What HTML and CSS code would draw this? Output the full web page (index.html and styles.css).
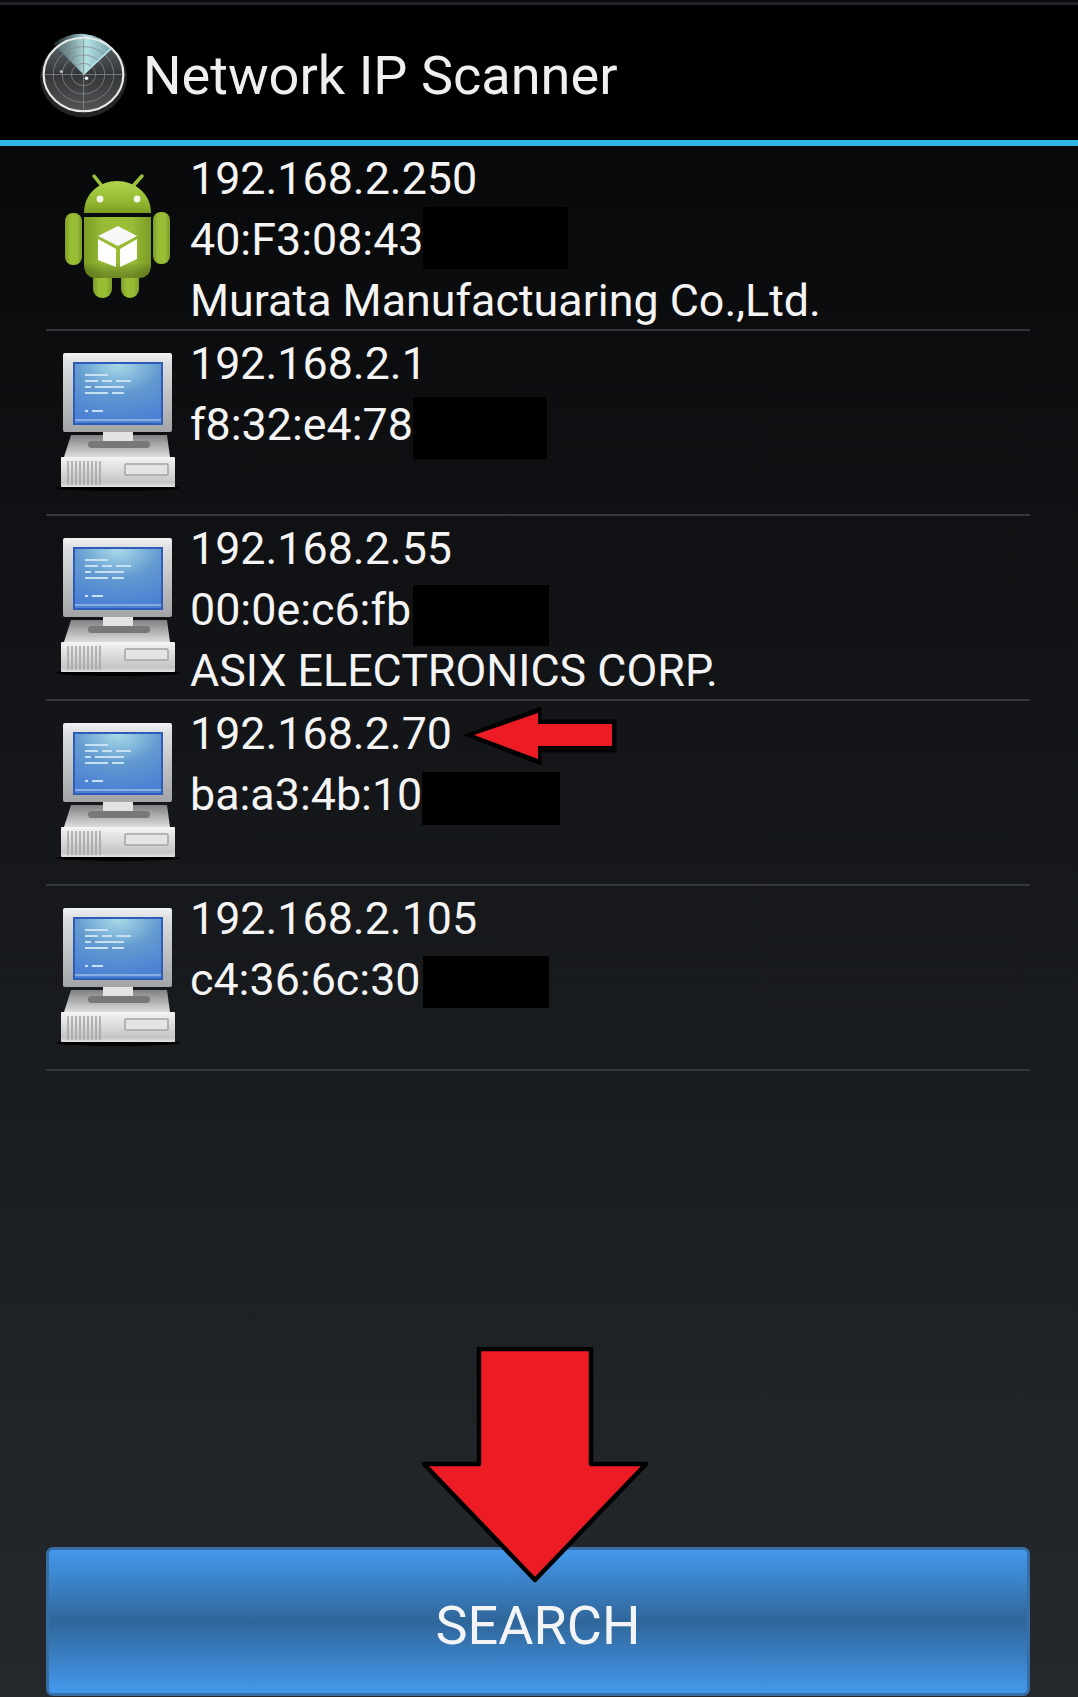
FILE: index.html
```html
<!DOCTYPE html>
<html lang="en">
<head>
<meta charset="utf-8">
<title>Network IP Scanner</title>
<link rel="stylesheet" href="styles.css">
</head>
<body>
<svg class="defs" width="0" height="0" aria-hidden="true">
  <defs>
    <linearGradient id="monFrame" x1="0" y1="0" x2="0" y2="1"><stop offset="0" stop-color="#f2f3f4"/><stop offset="0.12" stop-color="#dcdedf"/><stop offset="1" stop-color="#a2a4a6"/></linearGradient>
    <radialGradient id="monScreen" cx="0.5" cy="0" r="1"><stop offset="0" stop-color="#a9dbe8"/><stop offset="0.5" stop-color="#6299d0"/><stop offset="1" stop-color="#4b80d4"/></radialGradient>
    <linearGradient id="caseFront" x1="0" y1="0" x2="0" y2="1"><stop offset="0" stop-color="#f4f4f4"/><stop offset="0.85" stop-color="#c4c5c6"/><stop offset="1" stop-color="#e4e4e4"/></linearGradient>
    <linearGradient id="caseTop" x1="0" y1="0" x2="0" y2="1"><stop offset="0" stop-color="#7f8082"/><stop offset="1" stop-color="#dcddde"/></linearGradient>
    <linearGradient id="droidBody" x1="0" y1="0" x2="1" y2="0"><stop offset="0" stop-color="#7c9c26"/><stop offset="0.3" stop-color="#98bd36"/><stop offset="0.7" stop-color="#98bd36"/><stop offset="1" stop-color="#7c9c26"/></linearGradient>
    <linearGradient id="droidShade" x1="0" y1="0" x2="0" y2="1"><stop offset="0" stop-color="#000" stop-opacity="0"/><stop offset="0.75" stop-color="#000" stop-opacity="0"/><stop offset="1" stop-color="#3c4a10" stop-opacity="0.45"/></linearGradient>
    <linearGradient id="droidHead" x1="0" y1="0" x2="0" y2="1"><stop offset="0" stop-color="#b0d44e"/><stop offset="0.6" stop-color="#94ba32"/><stop offset="1" stop-color="#7d9e26"/></linearGradient>
    <linearGradient id="radarDisc" x1="0" y1="0" x2="0" y2="1"><stop offset="0" stop-color="#5f6b6f"/><stop offset="0.5" stop-color="#343638"/><stop offset="1" stop-color="#545556"/></linearGradient>
    <linearGradient id="radarWedge" x1="0" y1="0" x2="1" y2="0"><stop offset="0" stop-color="#6d9298" stop-opacity="0.25"/><stop offset="0.55" stop-color="#b4e2e4"/><stop offset="1" stop-color="#7fb4ba" stop-opacity="0.8"/></linearGradient>
    <filter id="soft" x="-5%" y="-5%" width="110%" height="110%"><feGaussianBlur stdDeviation="0.6"/></filter>
    <filter id="softer" x="-5%" y="-5%" width="110%" height="110%"><feGaussianBlur stdDeviation="0.75"/></filter>
    <symbol id="computer" viewBox="0 0 130 150">
      <g filter="url(#softer)">
        <ellipse cx="68" cy="143" rx="62" ry="3" fill="#000"/>
        <path d="M21 90H117L120 112H14Z" fill="url(#caseTop)"/>
        <rect x="11" y="112" width="114" height="30" rx="1" fill="url(#caseFront)"/>
        <path d="M18 116V140M22 116V140M26 116V140M30 116V140M34 116V140M38 116V140M42 116V140M46 116V140M50 116V140" stroke="#a5a6a7" stroke-width="1.6"/>
        <rect x="75" y="119" width="43" height="11" rx="1" fill="#e4e4e4" stroke="#a3a4a5" stroke-width="1.5"/>
        <rect x="53" y="87" width="30" height="9" fill="#e2e3e3"/>
        <rect x="38" y="96" width="62" height="7" rx="3.5" fill="#77787a"/>
        <rect x="13" y="8" width="109" height="79" rx="2" fill="url(#monFrame)"/>
        <rect x="23" y="17" width="90" height="63" fill="#2f5cb8"/>
        <rect x="25" y="19" width="86" height="59" fill="url(#monScreen)"/>
        <path d="M25 75H111" stroke="#87aede" stroke-width="2"/>
        <path d="M35 30H58M35 36H48M52 36H62M66 36H81M35 42H41M45 42H74M35 48H58M62 48H74M35 66H38M42 66H53" stroke="#c6e2f2" stroke-width="2.2"/>
      </g>
    </symbol>
  </defs>
</svg>
<div class="screen">
  <div class="status-line"></div>
  <header class="app-bar">
    <svg class="radar" viewBox="0 0 100 100" preserveAspectRatio="none" aria-hidden="true">
      <g filter="url(#soft)">
        <ellipse cx="50" cy="53" rx="43" ry="43" fill="#3a3a3a" opacity="0.6"/>
        <circle cx="50" cy="50" r="40" fill="url(#radarDisc)"/>
        <path d="M50 50L20 17A40 40 0 0 1 79 22Z" fill="url(#radarWedge)"/>
        <g fill="none" stroke="#85898b" stroke-width="0.8">
          <circle cx="50" cy="50" r="12"/>
          <circle cx="50" cy="50" r="21"/>
          <circle cx="50" cy="50" r="30"/>
          <path d="M10 50H90M50 10V90"/>
        </g>
        <path d="M50 50L77 22" stroke="#b7e6e8" stroke-width="1.4"/>
        <circle cx="53" cy="54" r="1.8" fill="#f2f2f2"/>
        <circle cx="28" cy="47" r="1.5" fill="#c8c8c8"/>
        <circle cx="50" cy="50" r="39.5" fill="none" stroke="#e6e8e8" stroke-width="2.2"/>
      </g>
    </svg>
    <h1 class="app-title">Network IP Scanner</h1>
  </header>
  <div class="accent-line"></div>
  <main class="device-list">
    <section class="device">
      <svg class="device-icon android" viewBox="0 0 130 140" aria-hidden="true">
        <g filter="url(#soft)">
          <path d="M52 16L44 6M83 16L92 6" stroke="#9cc23a" stroke-width="3.5" stroke-linecap="round"/>
          <path d="M34 43C34 23 50 11 67 11S101 23 101 43Z" fill="url(#droidHead)"/>
          <circle cx="50" cy="29" r="3.4" fill="#f4f6ea"/>
          <circle cx="87" cy="29" r="3.4" fill="#f4f6ea"/>
          <rect x="15" y="43" width="17" height="52" rx="8" fill="url(#droidBody)"/>
          <rect x="103" y="42" width="17" height="52" rx="8" fill="url(#droidBody)"/>
          <rect x="43" y="100" width="19" height="28" rx="9" fill="url(#droidBody)"/>
          <rect x="71" y="100" width="18" height="28" rx="9" fill="url(#droidBody)"/>
          <path d="M34 47H101V94Q101 108 88 108H47Q34 108 34 94Z" fill="url(#droidBody)"/>
          <path d="M34 47H101V94Q101 108 88 108H47Q34 108 34 94Z" fill="url(#droidShade)"/>
          <path d="M68 56L87 66L68 76L48 66Z" fill="#f7f7f7"/>
          <path d="M48 69L66 79V97L48 90Z" fill="#fff"/>
          <path d="M70 79L87 69V89L70 97Z" fill="#fff"/>
        </g>
      </svg>
      <div class="device-info">
        <div class="line">192.168.2.250</div>
        <div class="line">40:F3:08:43</div>
        <div class="line">Murata Manufactuaring Co.,Ltd.</div>
      </div>
      <div class="redact redact-1"></div>
    </section>
    <section class="device">
      <svg class="device-icon computer" aria-hidden="true"><use href="#computer"/></svg>
      <div class="device-info">
        <div class="line">192.168.2.1</div>
        <div class="line">f8:32:e4:78</div>
      </div>
      <div class="redact redact-2"></div>
    </section>
    <section class="device">
      <svg class="device-icon computer" aria-hidden="true"><use href="#computer"/></svg>
      <div class="device-info">
        <div class="line">192.168.2.55</div>
        <div class="line">00:0e:c6:fb</div>
        <div class="line">ASIX ELECTRONICS CORP.</div>
      </div>
      <div class="redact redact-3"></div>
    </section>
    <section class="device">
      <svg class="device-icon computer" aria-hidden="true"><use href="#computer"/></svg>
      <div class="device-info">
        <div class="line">192.168.2.70</div>
        <div class="line">ba:a3:4b:10</div>
      </div>
      <div class="redact redact-4"></div>
      <svg class="arrow-left" viewBox="0 0 156 60" aria-hidden="true">
        <path d="M2 29L79 1V14H154V46H79V59Z" fill="#000" stroke="#000" stroke-width="1" stroke-linejoin="round"/>
        <path d="M12 29L76 7V18H150V40H76V53Z" fill="#ed1c24"/>
      </svg>
    </section>
    <section class="device">
      <svg class="device-icon computer" aria-hidden="true"><use href="#computer"/></svg>
      <div class="device-info">
        <div class="line">192.168.2.105</div>
        <div class="line">c4:36:6c:30</div>
      </div>
      <div class="redact redact-5"></div>
    </section>
  </main>
  <div class="footer">
    <button class="search-btn" type="button">SEARCH</button>
    <svg class="arrow-down" viewBox="0 0 228 238" aria-hidden="true">
      <path d="M58 2H170V117H225L114 233L3 117H58Z" fill="#ed1c24" stroke="#000" stroke-width="4.5" stroke-linejoin="round"/>
    </svg>
  </div>
</div>
</body>
</html>
```
FILE: styles.css
```css
* { box-sizing: border-box; }

html, body {
  margin: 0;
  padding: 0;
  background: #08090b;
}

.defs {
  position: absolute;
}

.screen {
  display: flex;
  flex-direction: column;
  width: 1078px;
  height: 1697px;
  overflow: hidden;
  font-family: Roboto, "Liberation Sans", sans-serif;
  color: #f4f4f4;
  background: linear-gradient(#08090b 146px, #25292d 100%);
}

.status-line {
  height: 5px;
  flex: none;
  background: linear-gradient(#0c0d0e 2px, #212428 2px);
}

.app-bar {
  display: flex;
  align-items: center;
  height: 135px;
  flex: none;
  background: #000;
}

.radar {
  width: 101px;
  height: 93px;
  margin: 3px 0 0 33px;
  flex: none;
}

.app-title {
  margin: 6px 0 0 9px;
  font-size: 54.1px;
  font-weight: 400;
  line-height: 62px;
  color: #efefef;
}

.accent-line {
  height: 6px;
  flex: none;
  background: #33b5e5;
}

.device-list {
  flex: 1;
  display: flex;
  flex-direction: column;
  margin: 0 48px 0 46px;
}

.device {
  position: relative;
  display: flex;
  height: 185px;
  flex: none;
  border-bottom: 2px solid #35373a;
}

.device-icon {
  flex: none;
  width: 130px;
  margin: 0 10px 0 4px;
}

.android {
  height: 140px;
  margin-top: 24px;
}

.computer {
  height: 150px;
  margin-top: 14px;
}

.device-info {
  padding-top: 2px;
  font-size: 44.8px;
  line-height: 61px;
  white-space: nowrap;
}

.redact {
  position: absolute;
  background: #000;
}

.redact-1 { left: 377px; top: 61px; width: 145px; height: 62px; }
.redact-2 { left: 367px; top: 66px; width: 134px; height: 62px; }
.redact-3 { left: 367px; top: 69px; width: 136px; height: 61px; }
.redact-4 { left: 376px; top: 71px; width: 138px; height: 53px; }
.redact-5 { left: 377px; top: 70px; width: 126px; height: 52px; }

.arrow-left {
  position: absolute;
  left: 416px;
  top: 5px;
  width: 156px;
  height: 60px;
}

.footer {
  position: relative;
  flex: none;
  display: flex;
  padding: 0 48px 1px 46px;
}

.search-btn {
  width: 100%;
  height: 149px;
  padding: 7px 0 0;
  border: 3px solid #376ea6;
  border-radius: 7px;
  background: linear-gradient(#4499ec, #2f669a 50%, #4499ec);
  font-family: inherit;
  font-size: 54px;
  color: #f2f4f6;
}

.arrow-down {
  position: absolute;
  left: 421px;
  top: -200px;
  width: 228px;
  height: 238px;
}
```
